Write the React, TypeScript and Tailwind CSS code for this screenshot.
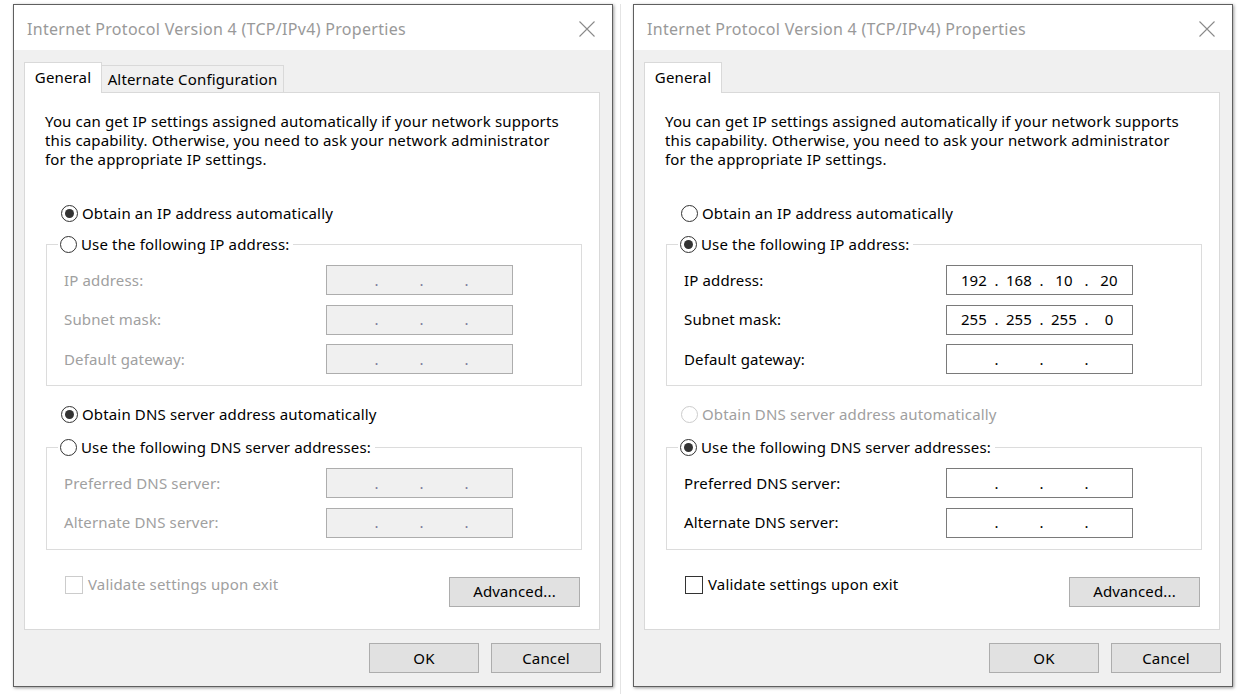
import React from 'react';

type Octets = [string, string, string, string];

function Radio({ checked, disabled }: { checked?: boolean; disabled?: boolean }) {
  return (
    <span
      className={`flex h-[17px] w-[17px] shrink-0 items-center justify-center rounded-full border bg-white ${
        disabled ? 'border-[#cccccc]' : 'border-[#333333]'
      }`}
    >
      {checked && <span className="h-[9px] w-[9px] rounded-full bg-[#333333]" />}
    </span>
  );
}

function RadioLabel({
  label,
  checked,
  disabled,
}: {
  label: string;
  checked?: boolean;
  disabled?: boolean;
}) {
  return (
    <span className="flex h-[20px] items-center gap-[4px] whitespace-nowrap">
      <Radio checked={checked} disabled={disabled} />
      <span className={disabled ? 'text-[#a0a0a0]' : 'text-black'}>{label}</span>
    </span>
  );
}

function IpField({ value, disabled }: { value?: Octets; disabled?: boolean }) {
  const parts = value || ['', '', '', ''];
  return (
    <div
      className={`flex h-[30px] w-[187px] items-center border pl-[7px] ${
        disabled
          ? 'border-[#adadad] bg-[#f0f0f0] text-[#7a7a9a]'
          : 'border-[#7a7a7a] bg-white text-black'
      }`}
    >
      {parts.map((p, i) => (
        <React.Fragment key={i}>
          <span className="w-[40px] text-center text-black">{p}</span>
          {i < 3 && <span className="w-[5px] text-center">.</span>}
        </React.Fragment>
      ))}
    </div>
  );
}

function FieldRow({
  label,
  value,
  disabled,
}: {
  label: string;
  value?: Octets;
  disabled?: boolean;
}) {
  return (
    <div className="flex h-[30px] items-center">
      <span className={`w-[262px] ${disabled ? 'text-[#a0a0a0]' : 'text-black'}`}>{label}</span>
      <IpField value={value} disabled={disabled} />
    </div>
  );
}

function GroupBox({
  legend,
  checked,
  children,
}: {
  legend: string;
  checked?: boolean;
  children: React.ReactNode;
}) {
  return (
    <fieldset className="ml-[21px] w-[536px] border border-[#dcdcdc] p-0">
      <legend className="ml-[11px] pl-[2px] pr-[4px]">
        <RadioLabel label={legend} checked={checked} />
      </legend>
      <div className="flex flex-col gap-[9.5px] pb-[11px] pl-[17px] pt-[11px]">{children}</div>
    </fieldset>
  );
}

function Button({ label, className }: { label: string; className: string }) {
  return (
    <div
      className={`flex h-[30px] items-center justify-center border border-[#adadad] bg-[#e1e1e1] text-black ${className}`}
    >
      {label}
    </div>
  );
}

function Dialog({ alternate }: { alternate: boolean }) {
  // left one: everything automatic, right one: static address filled in
  const manual = !alternate;
  return (
    <div className="flex h-[683px] w-[600px] shrink-0 flex-col border border-[#5f5f5f] shadow-[1px_1px_3px_rgba(0,0,0,0.4)]">
      <div className="flex h-[45px] items-center justify-between bg-white pl-[13px] pr-[17px] pt-[2px]">
        <span className="text-[16px] tracking-[0.3px] text-[#999999]">
          Internet Protocol Version 4 (TCP/IPv4) Properties
        </span>
        <svg width="16" height="16" viewBox="0 0 16 16">
          <path d="M0.5 0.5 L15.5 15.5 M15.5 0.5 L0.5 15.5" stroke="#8a8a8a" strokeWidth="1.1" />
        </svg>
      </div>

      <div className="flex flex-1 flex-col bg-[#f0f0f0] px-[10px] pt-[12px]">
        <div className="flex h-[30px] items-end">
          <div className="relative z-10 -mb-px flex h-[31px] w-[78px] items-center justify-center border border-b-0 border-[#d9d9d9] bg-white pb-[1px]">
            General
          </div>
          {alternate && (
            <div className="flex h-[27px] w-[182px] items-center justify-center border border-b-0 border-l-0 border-[#d9d9d9] bg-[#f0f0f0]">
              Alternate Configuration
            </div>
          )}
        </div>

        <div className="flex h-[538px] w-[576px] flex-col border border-[#d9d9d9] bg-white">
          <p className="whitespace-nowrap pl-[20px] pt-[19px] leading-[19px]">
            You can get IP settings assigned automatically if your network supports
            <br />
            this capability. Otherwise, you need to ask your network administrator
            <br />
            for the appropriate IP settings.
          </p>

          <div className="ml-[36px] mt-[34px]">
            <RadioLabel label="Obtain an IP address automatically" checked={!manual} />
          </div>

          <div className="mt-[11px]">
            <GroupBox legend="Use the following IP address:" checked={manual}>
              <FieldRow label="IP address:" disabled={!manual} value={manual ? ['192', '168', '10', '20'] : undefined} />
              <FieldRow label="Subnet mask:" disabled={!manual} value={manual ? ['255', '255', '255', '0'] : undefined} />
              <FieldRow label="Default gateway:" disabled={!manual} />
            </GroupBox>
          </div>

          <div className="ml-[36px] mt-[18px]">
            <RadioLabel label="Obtain DNS server address automatically" checked={!manual} disabled={manual} />
          </div>

          <div className="mt-[13px]">
            <GroupBox legend="Use the following DNS server addresses:" checked={manual}>
              <FieldRow label="Preferred DNS server:" disabled={!manual} />
              <FieldRow label="Alternate DNS server:" disabled={!manual} />
            </GroupBox>
          </div>

          <div className="mt-[26px] flex items-start justify-between pl-[40px] pr-[19px]">
            <div className="flex h-[18px] items-center gap-[5px]">
              <span
                className={`h-[18px] w-[18px] border bg-white ${
                  manual ? 'border-[#333333]' : 'border-[#cccccc]'
                }`}
              />
              <span className={manual ? 'text-black' : 'text-[#a0a0a0]'}>Validate settings upon exit</span>
            </div>
            <Button label="Advanced..." className="mt-[1px] w-[131px]" />
          </div>
        </div>

        <div className="mt-[13px] flex justify-end gap-[12px] pr-[1px]">
          <Button label="OK" className="w-[110px]" />
          <Button label="Cancel" className="w-[110px]" />
        </div>
      </div>
    </div>
  );
}

export default function App() {
  return (
    <div className="flex h-[694px] w-[1240px] items-start bg-white pl-[13px] pt-[4px] font-['Noto_Sans',sans-serif] text-[15px] tracking-[0.15px] text-black">
      <Dialog alternate={true} />
      <div className="ml-[7px] mr-[12px] h-[690px] w-px self-start bg-[#e4e4e4]" />
      <Dialog alternate={false} />
    </div>
  );
}
